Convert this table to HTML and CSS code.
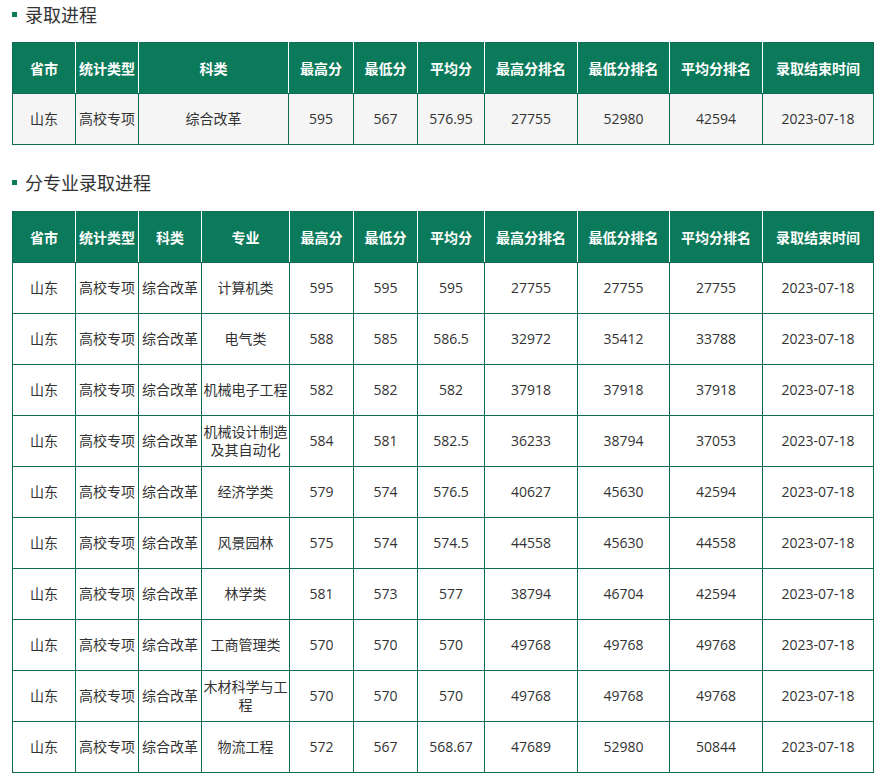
FILE: index.html
```html
<!DOCTYPE html>
<html lang="zh-CN">
<head>
<meta charset="utf-8">
<title>录取进程</title>
<link rel="stylesheet" href="styles.css">
</head>
<body>
<div class="page">
  <h2 class="title first"><span class="dot"></span>录取进程</h2>
  <table class="grid">
    <colgroup>
      <col class="w63"><col class="w63"><col class="w150"><col class="w65"><col class="w64"><col class="w67"><col class="w93"><col class="w92"><col class="w93"><col class="w111">
    </colgroup>
    <thead>
      <tr><th>省市</th><th>统计类型</th><th>科类</th><th>最高分</th><th>最低分</th><th>平均分</th><th>最高分排名</th><th>最低分排名</th><th>平均分排名</th><th>录取结束时间</th></tr>
    </thead>
    <tbody class="grey">
      <tr><td>山东</td><td>高校专项</td><td>综合改革</td><td>595</td><td>567</td><td>576.95</td><td>27755</td><td>52980</td><td>42594</td><td>2023-07-18</td></tr>
    </tbody>
  </table>

  <h2 class="title second"><span class="dot"></span>分专业录取进程</h2>
  <table class="grid">
    <colgroup>
      <col class="w63"><col class="w63"><col class="w63"><col class="w88"><col class="w64"><col class="w64"><col class="w67"><col class="w93"><col class="w92"><col class="w93"><col class="w111">
    </colgroup>
    <thead>
      <tr><th>省市</th><th>统计类型</th><th>科类</th><th>专业</th><th>最高分</th><th>最低分</th><th>平均分</th><th>最高分排名</th><th>最低分排名</th><th>平均分排名</th><th>录取结束时间</th></tr>
    </thead>
    <tbody>
      <tr><td>山东</td><td>高校专项</td><td>综合改革</td><td>计算机类</td><td>595</td><td>595</td><td>595</td><td>27755</td><td>27755</td><td>27755</td><td>2023-07-18</td></tr>
      <tr><td>山东</td><td>高校专项</td><td>综合改革</td><td>电气类</td><td>588</td><td>585</td><td>586.5</td><td>32972</td><td>35412</td><td>33788</td><td>2023-07-18</td></tr>
      <tr><td>山东</td><td>高校专项</td><td>综合改革</td><td>机械电子工程</td><td>582</td><td>582</td><td>582</td><td>37918</td><td>37918</td><td>37918</td><td>2023-07-18</td></tr>
      <tr><td>山东</td><td>高校专项</td><td>综合改革</td><td>机械设计制造及其自动化</td><td>584</td><td>581</td><td>582.5</td><td>36233</td><td>38794</td><td>37053</td><td>2023-07-18</td></tr>
      <tr><td>山东</td><td>高校专项</td><td>综合改革</td><td>经济学类</td><td>579</td><td>574</td><td>576.5</td><td>40627</td><td>45630</td><td>42594</td><td>2023-07-18</td></tr>
      <tr><td>山东</td><td>高校专项</td><td>综合改革</td><td>风景园林</td><td>575</td><td>574</td><td>574.5</td><td>44558</td><td>45630</td><td>44558</td><td>2023-07-18</td></tr>
      <tr><td>山东</td><td>高校专项</td><td>综合改革</td><td>林学类</td><td>581</td><td>573</td><td>577</td><td>38794</td><td>46704</td><td>42594</td><td>2023-07-18</td></tr>
      <tr><td>山东</td><td>高校专项</td><td>综合改革</td><td>工商管理类</td><td>570</td><td>570</td><td>570</td><td>49768</td><td>49768</td><td>49768</td><td>2023-07-18</td></tr>
      <tr><td>山东</td><td>高校专项</td><td>综合改革</td><td>木材科学与工程</td><td>570</td><td>570</td><td>570</td><td>49768</td><td>49768</td><td>49768</td><td>2023-07-18</td></tr>
      <tr><td>山东</td><td>高校专项</td><td>综合改革</td><td>物流工程</td><td>572</td><td>567</td><td>568.67</td><td>47689</td><td>52980</td><td>50844</td><td>2023-07-18</td></tr>
    </tbody>
  </table>
</div>
</body>
</html>
```

FILE: styles.css
```css
html, body {
  margin: 0;
  padding: 0;
  background: #ffffff;
}

.page {
  padding: 0 10px 0 12px;
  font-family: "Open Sans", "Noto Sans CJK SC", sans-serif;
  color: #333333;
}

.title {
  display: flex;
  align-items: center;
  gap: 8px;
  margin: 0;
  font-family: "Noto Sans CJK SC", sans-serif;
  font-size: 18px;
  font-weight: normal;
  line-height: 24px;
  color: #333333;
}

.title.first {
  padding-top: 2px;
  margin-bottom: 16px;
}

.title.second {
  margin-top: 25px;
  margin-bottom: 17px;
}

.dot {
  width: 5px;
  height: 5px;
  background: #0b7a5a;
  flex: none;
}

.grid {
  width: 861px;
  table-layout: fixed;
  border-collapse: collapse;
  border: 1px solid #0f6b53;
  font-size: 14px;
}

.w63 { width: 63px; }
.w64 { width: 64px; }
.w65 { width: 65px; }
.w67 { width: 67px; }
.w88 { width: 88px; }
.w92 { width: 92px; }
.w93 { width: 93px; }
.w111 { width: 111px; }
.w150 { width: 150px; }

.grid th {
  height: 50px;
  padding: 0 1px;
  background: #0b7a5a;
  color: #ffffff;
  font-family: "Noto Sans CJK SC", sans-serif;
  font-weight: bold;
  font-size: 14px;
  text-align: center;
  vertical-align: middle;
  border-left: 1px solid #ffffff;
  border-right: 1px solid #ffffff;
  border-top: 1px solid #0f6b53;
  border-bottom: 1px solid #0f6b53;
  white-space: nowrap;
}

.grid th:first-child {
  border-left: 1px solid #0f6b53;
}

.grid th:last-child {
  border-right: 1px solid #0f6b53;
}

.grid td {
  height: 50px;
  padding: 0 1px;
  text-align: center;
  vertical-align: middle;
  border: 1px solid #0f6b53;
  line-height: 18px;
  color: #333333;
  background: #ffffff;
}

.grid .grey td {
  background: #f5f5f5;
}
```
